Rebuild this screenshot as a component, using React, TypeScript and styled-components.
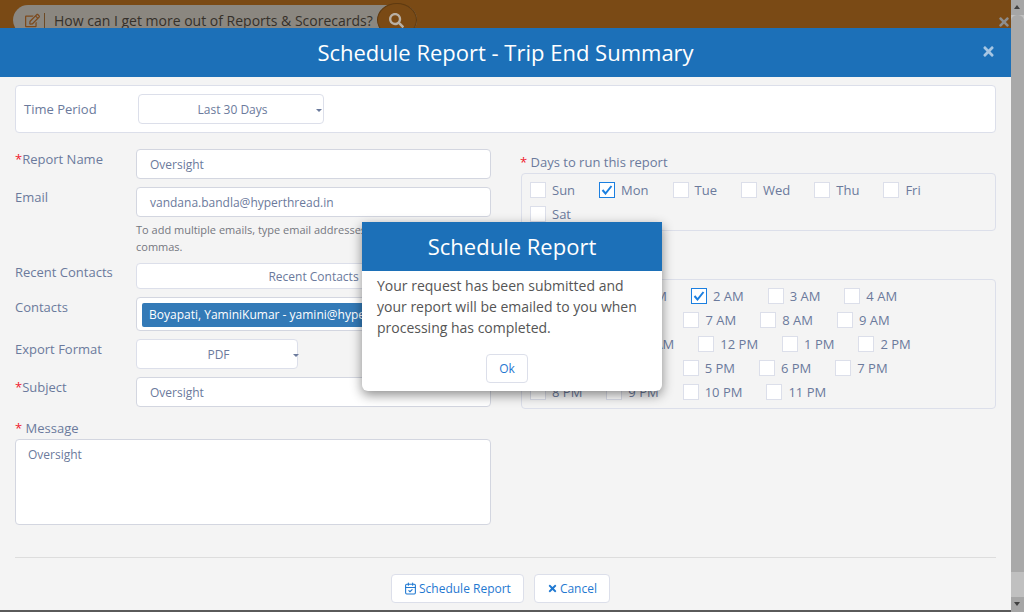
import {createGlobalStyle} from "styled-components";
import styled from "styled-components";
import {FaRegEdit, FaSearch, FaTimes} from "react-icons/fa";
import {LuCalendarCheck} from "react-icons/lu";

const DAYS = ["Sun", "Mon", "Tue", "Wed", "Thu", "Fri", "Sat"];
const HOURS = [
  "12 AM", "1 AM", "2 AM", "3 AM", "4 AM", "5 AM", "6 AM", "7 AM", "8 AM", "9 AM", "10 AM", "11 AM",
  "12 PM", "1 PM", "2 PM", "3 PM", "4 PM", "5 PM", "6 PM", "7 PM", "8 PM", "9 PM", "10 PM", "11 PM",
];

const CheckItem = ({label, checked}: {label: string; checked?: boolean}) => (
  <Check>
    <Box $checked={checked}>
      {checked && (
        <svg width="12" height="10" viewBox="0 0 12 10">
          <path d="M1.5 5 L4.5 8.5 L10.5 1" fill="none" stroke="#1b7fe0" strokeWidth="2" />
        </svg>
      )}
    </Box>
    {label}
  </Check>
);

const App = () => {
  return (
    <Page>
      <GlobalStyle />
      <Main>
        <TopBar>
          <SearchPill>
            <FaRegEdit size={15} color="#7d4a1c" />
            <PillDivider />
            How can I get more out of Reports &amp; Scorecards?
            <SearchButton>
              <FaSearch size={15} color="#b9b0a4" />
            </SearchButton>
          </SearchPill>
          <BackClose>
            <FaTimes size={14} />
          </BackClose>
        </TopBar>
        <Modal>
          <Header>
            Schedule Report - Trip End Summary
            <HeaderClose>
              <FaTimes size={15} />
            </HeaderClose>
          </Header>
          <Body>
            <PeriodCard>
              <PeriodLabel>Time Period</PeriodLabel>
              <Select $width={186} $arrowRight={1}>Last 30 Days</Select>
            </PeriodCard>
            <Columns>
              <LeftColumn>
                <Row>
                  <Label><Star>*</Star>Report Name</Label>
                  <Input>Oversight</Input>
                </Row>
                <Row>
                  <Label>Email</Label>
                  <Input>vandana.bandla@hyperthread.in</Input>
                </Row>
                <Help>To add multiple emails, type email addresses separated by commas.</Help>
                <Row>
                  <Label $tight>Recent Contacts</Label>
                  <Select $height={26} $hideArrow>Recent Contacts</Select>
                </Row>
                <Row>
                  <Label>Contacts</Label>
                  <ContactsBox>
                    <Chip>Boyapati, YaminiKumar - yamini@hyperthread.in</Chip>
                  </ContactsBox>
                </Row>
                <Row>
                  <Label>Export Format</Label>
                  <Select $width={162} $arrowRight={-2}>PDF</Select>
                </Row>
                <Row>
                  <Label><Star>*</Star>Subject</Label>
                  <Input>Oversight</Input>
                </Row>
                <MessageLabel><Star>*</Star> Message</MessageLabel>
                <MessageBox>Oversight</MessageBox>
              </LeftColumn>
              <RightColumn>
                <GroupLabel><Star>*</Star> Days to run this report</GroupLabel>
                <Group>
                  {DAYS.map((d) => (
                    <CheckItem key={d} label={d} checked={d === "Mon"} />
                  ))}
                </Group>
                <HoursLabel><Star>*</Star> Hours to run</HoursLabel>
                <Group>
                  {HOURS.map((h) => (
                    <CheckItem key={h} label={h} checked={h === "2 AM"} />
                  ))}
                </Group>
              </RightColumn>
            </Columns>
            <Footer>
              <FooterButton>
                <LuCalendarCheck size={13} />
                Schedule Report
              </FooterButton>
              <FooterButton>
                <FaTimes size={11} />
                Cancel
              </FooterButton>
            </Footer>
          </Body>
        </Modal>
        <Edge />
        <Dialog>
          <DialogHeader>Schedule Report</DialogHeader>
          <DialogText>
            Your request has been submitted and your report will be emailed to you when processing has completed.
          </DialogText>
          <DialogActions>
            <OkButton>Ok</OkButton>
          </DialogActions>
        </Dialog>
      </Main>
      <Scrollbar>
        <ScrollButton $down={false} />
        <ScrollThumb />
        <ScrollTrack />
        <ScrollButton $down />
      </Scrollbar>
    </Page>
  );
};

const GlobalStyle = createGlobalStyle`
  html, body {
    margin: 0;
    padding: 0;
    height: 100%;
    overflow: hidden;
  }
  * {
    box-sizing: border-box;
  }
  body {
    font-family: "Open Sans", "Liberation Sans", sans-serif;
    font-size: 13px;
    color: #6b7a9c;
  }
`;

const Page = styled.div`
  display: flex;
  width: 1024px;
  height: 612px;
  overflow: hidden;
`;

const Main = styled.div`
  position: relative;
  flex: 1;
  display: flex;
  flex-direction: column;
  min-width: 0;
`;

const TopBar = styled.div`
  position: relative;
  height: 28px;
  flex: none;
  background: #7a4a15;
  padding: 5px 0 0 13px;
  overflow: hidden;
`;

const SearchPill = styled.div`
  display: flex;
  align-items: center;
  width: 404px;
  height: 30px;
  padding-left: 12px;
  border-radius: 15px;
  background: #8b8780;
  color: #35302a;
  font-size: 14px;
  white-space: nowrap;
`;

const PillDivider = styled.span`
  width: 1px;
  height: 15px;
  margin: 0 9px 0 4px;
  background: #6d4a25;
`;

const SearchButton = styled.span`
  display: flex;
  align-items: center;
  justify-content: center;
  width: 40px;
  height: 34px;
  margin-left: 4px;
  flex: none;
  border: 1px solid #5f3a10;
  border-radius: 50%;
  background: #7a4a15;
`;

const BackClose = styled.span`
  position: absolute;
  top: 15px;
  right: 0;
  color: #8d8d8d;
`;

const Modal = styled.div`
  flex: 1;
  display: flex;
  flex-direction: column;
  min-height: 0;
  background: #f4f4f4;
`;

const Header = styled.div`
  position: relative;
  flex: none;
  height: 49px;
  line-height: 48px;
  background: #1c70b8;
  color: #fff;
  font-size: 22px;
  text-align: center;
`;

const HeaderClose = styled.span`
  position: absolute;
  top: 16px;
  right: 15px;
  display: flex;
  color: #a6c6e3;
`;

const Body = styled.div`
  flex: 1;
  padding: 8px 15px 0;
`;

const PeriodCard = styled.div`
  display: flex;
  align-items: center;
  height: 48px;
  padding-left: 8px;
  background: #fff;
  border: 1px solid #dcdfea;
  border-radius: 4px;
`;

const PeriodLabel = styled.div`
  width: 114px;
`;

const Select = styled.div<{$width?: number; $height?: number; $hideArrow?: boolean; $arrowRight?: number}>`
  position: relative;
  width: ${({$width}) => ($width ? `${$width}px` : "100%")};
  height: ${({$height}) => $height || 30}px;
  line-height: ${({$height}) => $height || 30}px;
  padding-left: ${({$hideArrow}) => ($hideArrow ? 0 : 3)}px;
  background: #fff;
  border: 1px solid #dcdfea;
  border-radius: 4px;
  font-size: 12px;
  text-align: center;

  &::after {
    content: "";
    display: ${({$hideArrow}) => ($hideArrow ? "none" : "block")};
    position: absolute;
    top: 14px;
    right: ${({$arrowRight}) => $arrowRight || 0}px;
    border-left: 3.5px solid transparent;
    border-right: 3.5px solid transparent;
    border-top: 3.5px solid #6b7a9c;
  }
`;

const Columns = styled.div`
  display: grid;
  grid-template-columns: 476px 475px;
  column-gap: 30px;
  padding-top: 16px;
`;

const LeftColumn = styled.div`
  display: flex;
  flex-direction: column;
`;

const RightColumn = styled.div`
  display: flex;
  flex-direction: column;
  padding-top: 3px;
`;

const Row = styled.div`
  display: grid;
  grid-template-columns: 121px 355px;
  margin-bottom: 8px;
`;

const Label = styled.div<{$tight?: boolean}>`
  line-height: ${({$tight}) => ($tight ? 18 : 20)}px;
`;

const Star = styled.span`
  color: #f01a2c;
`;

const Input = styled.div`
  height: 30px;
  line-height: 30px;
  padding-left: 13px;
  background: #fff;
  border: 1px solid #d3d6e0;
  border-radius: 4px;
  font-size: 12px;
`;

const Help = styled.div`
  margin: -4px 0 8px 121px;
  width: 340px;
  font-size: 11px;
  line-height: 17px;
  color: #74777f;
`;

const ContactsBox = styled.div`
  height: 34px;
  padding: 5px;
  background: #fff;
  border: 1px solid #d3d6e0;
  border-radius: 4px;
  overflow: hidden;
`;

const Chip = styled.div`
  height: 24px;
  line-height: 24px;
  padding-left: 7px;
  background: #337ab7;
  border-radius: 2px;
  color: #fff;
  font-size: 12px;
  white-space: nowrap;
  overflow: hidden;
`;

const MessageLabel = styled.div`
  margin-top: 1px;
  height: 23px;
  line-height: 24px;
`;

const MessageBox = styled.div`
  height: 86px;
  padding: 6px 12px;
  line-height: 18px;
  background: #fff;
  border: 1px solid #d3d6e0;
  border-radius: 4px;
  font-size: 12px;
`;

const GroupLabel = styled.div`
  height: 20px;
  line-height: 20px;
  margin-left: -1px;
  margin-bottom: 1px;
`;

const HoursLabel = styled(GroupLabel)`
  margin-top: 16px;
  margin-bottom: 12px;
`;

const Group = styled.div`
  display: flex;
  flex-wrap: wrap;
  row-gap: 8px;
  padding: 8px 12px 8px 8px;
  border: 1px solid #dcdfea;
  border-radius: 4px;
`;

const Check = styled.div`
  display: flex;
  align-items: center;
  gap: 6px;
  height: 16px;
  margin-right: 24px;
  line-height: 16px;
`;

const Box = styled.span<{$checked?: boolean}>`
  display: flex;
  align-items: center;
  justify-content: center;
  width: 16px;
  height: 16px;
  flex: none;
  background: #fff;
  border: 1px solid ${({$checked}) => ($checked ? "#1b7fe0" : "#dcdfea")};
`;

const Footer = styled.div`
  display: flex;
  justify-content: center;
  gap: 10px;
  margin-top: 32px;
  padding: 16px 10px 0 0;
  border-top: 1px solid #dddddd;
`;

const FooterButton = styled.button`
  display: flex;
  align-items: center;
  gap: 2px;
  height: 29px;
  padding: 0 12px;
  background: #fff;
  border: 1px solid #dcdfea;
  border-radius: 4px;
  color: #1f78d1;
  font-family: inherit;
  font-size: 12px;
`;

const Edge = styled.div`
  flex: none;
  height: 2px;
  background: #5a5a5a;
`;

const Dialog = styled.div`
  position: absolute;
  top: 222px;
  left: 362px;
  width: 300px;
  height: 169px;
  background: #fff;
  border-radius: 0 0 6px 6px;
  box-shadow: 0 4px 12px rgba(0, 0, 0, 0.45);
`;

const DialogHeader = styled.div`
  height: 49px;
  line-height: 48px;
  background: #1c70b8;
  color: #fff;
  font-size: 22px;
  text-align: center;
`;

const DialogText = styled.div`
  padding: 4px 15px 0;
  font-size: 14px;
  line-height: 21px;
  color: #555;
`;

const DialogActions = styled.div`
  display: flex;
  justify-content: center;
  margin-top: 16px;
  padding-right: 10px;
`;

const OkButton = styled.button`
  width: 42px;
  height: 29px;
  background: #fff;
  border: 1px solid #dcdfea;
  border-radius: 4px;
  color: #1f78d1;
  font-family: inherit;
  font-size: 12px;
`;

const Scrollbar = styled.div`
  flex: none;
  width: 13px;
  display: flex;
  flex-direction: column;
  background: #c0c0c0;
`;

const ScrollButton = styled.div<{$down: boolean}>`
  flex: none;
  height: 15px;
  background: #a6a6a6;
  position: relative;

  &::after {
    content: "";
    position: absolute;
    top: 5px;
    left: 3px;
    border-left: 3.5px solid transparent;
    border-right: 3.5px solid transparent;
    border-bottom: ${({$down}) => ($down ? "none" : "4px solid #404040")};
    border-top: ${({$down}) => ($down ? "4px solid #404040" : "none")};
  }
`;

const ScrollThumb = styled.div`
  flex: none;
  height: 557px;
  background: #a9a9a9;
  border-radius: 6px 6px 0 0;
`;

const ScrollTrack = styled.div`
  flex: 1;
`;

export default App;
